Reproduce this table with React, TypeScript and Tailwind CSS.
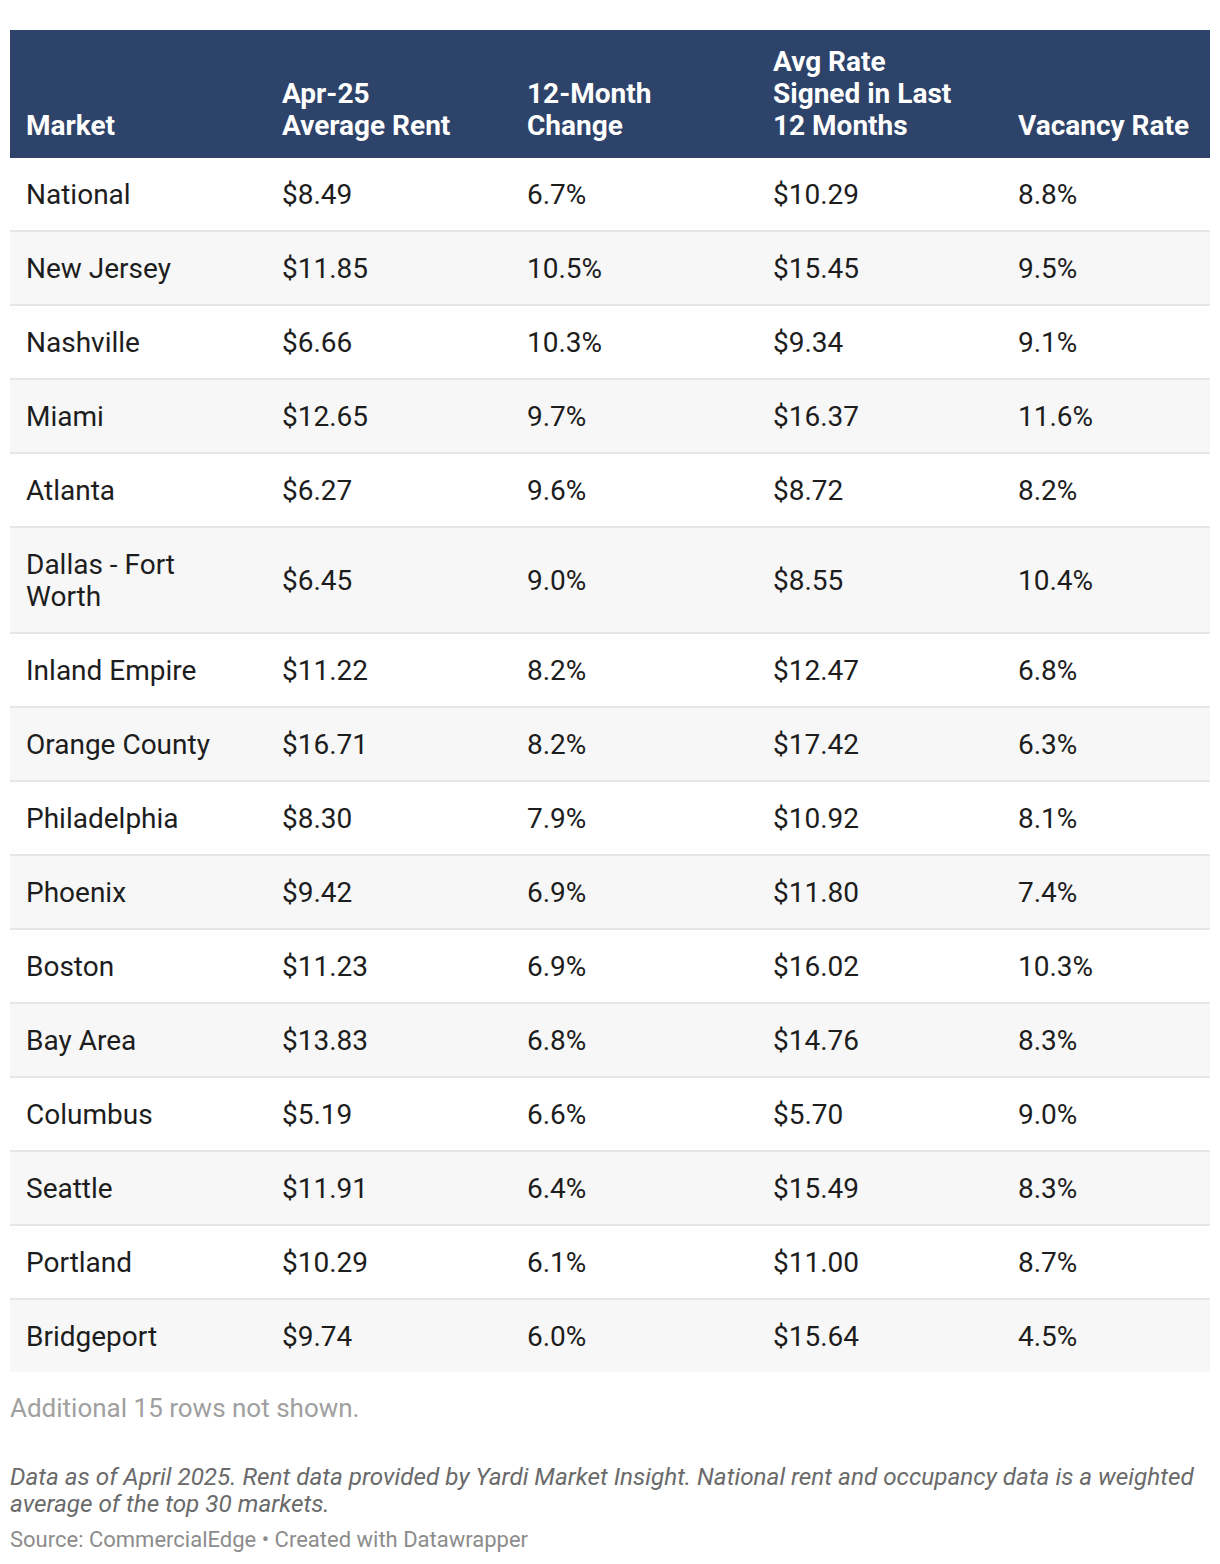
const rows = [
    ['National', '$8.49', '6.7%', '$10.29', '8.8%'],
    ['New Jersey', '$11.85', '10.5%', '$15.45', '9.5%'],
    ['Nashville', '$6.66', '10.3%', '$9.34', '9.1%'],
    ['Miami', '$12.65', '9.7%', '$16.37', '11.6%'],
    ['Atlanta', '$6.27', '9.6%', '$8.72', '8.2%'],
    ['Dallas - Fort Worth', '$6.45', '9.0%', '$8.55', '10.4%'],
    ['Inland Empire', '$11.22', '8.2%', '$12.47', '6.8%'],
    ['Orange County', '$16.71', '8.2%', '$17.42', '6.3%'],
    ['Philadelphia', '$8.30', '7.9%', '$10.92', '8.1%'],
    ['Phoenix', '$9.42', '6.9%', '$11.80', '7.4%'],
    ['Boston', '$11.23', '6.9%', '$16.02', '10.3%'],
    ['Bay Area', '$13.83', '6.8%', '$14.76', '8.3%'],
    ['Columbus', '$5.19', '6.6%', '$5.70', '9.0%'],
    ['Seattle', '$11.91', '6.4%', '$15.49', '8.3%'],
    ['Portland', '$10.29', '6.1%', '$11.00', '8.7%'],
    ['Bridgeport', '$9.74', '6.0%', '$15.64', '4.5%'],
];

const headers = ['Market', 'Apr-25 Average Rent', '12-Month Change', 'Avg Rate Signed in Last 12 Months', 'Vacancy Rate'];

export default function App() {
    return (
        <div className="bg-white px-[10px] pt-[30px] pb-[10px] font-['Roboto',sans-serif]">
            <table className="w-[1200px] table-fixed border-collapse">
                <colgroup>
                    <col className="w-[256px]" />
                    <col className="w-[245px]" />
                    <col className="w-[246px]" />
                    <col className="w-[245px]" />
                    <col className="w-[208px]" />
                </colgroup>
                <thead>
                    <tr className="bg-[#2e4369]">
                        {headers.map((h, i) => (
                            <th
                                key={h}
                                className={`py-4 pl-[16px] text-left align-bottom text-[28px] leading-8 font-bold text-white ${i === 1 ? 'pr-[50px]' : i === 3 ? 'pr-[40px]' : 'pr-2'}`}
                            >
                                {h}
                            </th>
                        ))}
                    </tr>
                </thead>
                <tbody>
                    {rows.map((r, i) => (
                        <tr
                            key={r[0]}
                            className={`${i % 2 === 1 ? 'bg-[#f7f7f7]' : 'bg-white'} ${i < rows.length - 1 ? 'border-b-2 border-[#e6e6e6]' : ''}`}
                        >
                            {r.map((c, j) => (
                                <td
                                    key={j}
                                    className={`pt-[21px] pb-[19px] pl-[16px] align-middle text-[28px] leading-8 text-[#1d1d1d] ${j === 0 ? 'pr-[30px]' : 'pr-3'}`}
                                >
                                    {c}
                                </td>
                            ))}
                        </tr>
                    ))}
                </tbody>
            </table>
            <p className="mt-[20px] text-[26px] leading-8 text-[#a0a0a0]">Additional 15 rows not shown.</p>
            <p className="mt-[39px] text-[24.3px] leading-[27px] text-[#6a6a6a] italic">
                Data as of April 2025. Rent data provided by Yardi Market Insight. National rent and occupancy data is a weighted average of the top 30 markets.
            </p>
            <p className="mt-[9px] text-[22px] leading-[28px] text-[#8c8c8c]">Source: CommercialEdge • Created with Datawrapper</p>
        </div>
    );
}
